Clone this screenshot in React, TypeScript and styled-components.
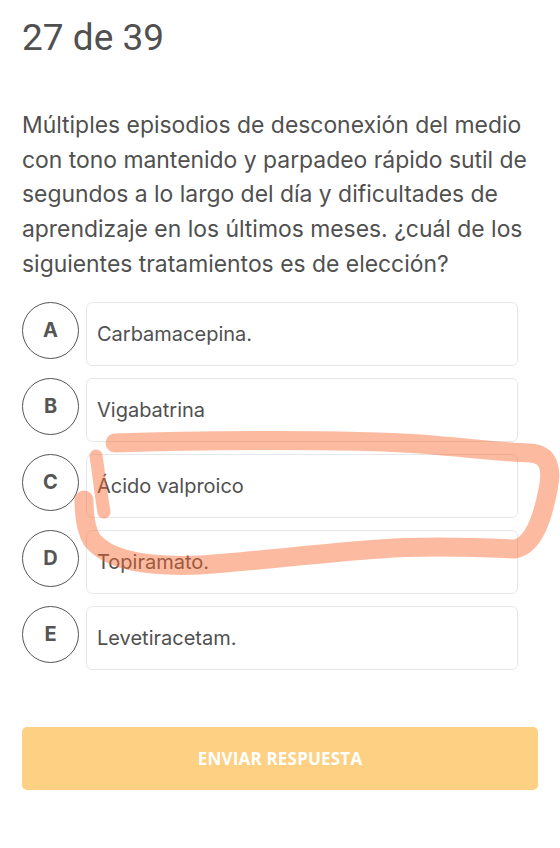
import React from "react";
import styled, { createGlobalStyle } from "styled-components";

const GlobalStyle = createGlobalStyle`
  html, body {
    margin: 0;
    padding: 0;
    background: #ffffff;
  }
  body {
    font-family: Inter, "Liberation Sans", sans-serif;
    color: #555555;
  }
`;

const Page = styled.div`
  position: relative;
  width: 560px;
  min-height: 848px;
  box-sizing: border-box;
  padding: 16px 22px 0;
`;

const Counter = styled.h1`
  margin: 0;
  font-family: Roboto, "Liberation Sans", sans-serif;
  font-size: 37px;
  line-height: 43px;
  font-weight: 400;
  color: #505050;
`;

const Question = styled.p`
  margin: 49px 0 0;
  font-size: 22.9px;
  line-height: 34.7px;
  color: #505050;
`;

const OptionList = styled.div`
  display: flex;
  flex-direction: column;
  gap: 12px;
  margin-top: 20px;
  padding-right: 20px;
`;

const OptionRow = styled.div`
  display: flex;
  align-items: flex-start;
  gap: 7px;
`;

const Letter = styled.div`
  flex: 0 0 auto;
  width: 55px;
  height: 55px;
  border: 1px solid #555555;
  border-radius: 50%;
  display: flex;
  align-items: center;
  justify-content: center;
  font-size: 20px;
  font-weight: 700;
  color: #555555;
`;

const OptionBox = styled.div`
  flex: 1;
  height: 62px;
  border: 1px solid #e4e8ec;
  border-radius: 6px;
  display: flex;
  align-items: center;
  padding: 0 10px;
  font-size: 20px;
  color: #505050;
`;

const SubmitButton = styled.button`
  display: block;
  width: 100%;
  height: 63px;
  margin-top: 57px;
  border: none;
  border-radius: 5px;
  background: #fed083;
  color: #ffffff;
  font-family: "Open Sans", "Liberation Sans", sans-serif;
  font-weight: 700;
  font-size: 17px;
  letter-spacing: 0.2px;
`;

const Scribble = styled.svg`
  position: absolute;
  left: 0;
  top: 0;
  width: 560px;
  height: 848px;
  pointer-events: none;
`;

const options = [
  { letter: "A", text: "Carbamacepina." },
  { letter: "B", text: "Vigabatrina" },
  { letter: "C", text: "Ácido valproico" },
  { letter: "D", text: "Topiramato." },
  { letter: "E", text: "Levetiracetam." },
];

export default function App() {
  return (
    <>
      <GlobalStyle />
      <Page>
        <Counter>27 de 39</Counter>
        <Question>
          Múltiples episodios de desconexión del medio con tono mantenido y
          parpadeo rápido sutil de segundos a lo largo del día y dificultades
          de aprendizaje en los últimos meses. ¿cuál de los siguientes
          tratamientos es de elección?
        </Question>
        <OptionList>
          {options.map((o) => (
            <OptionRow key={o.letter}>
              <Letter>{o.letter}</Letter>
              <OptionBox>{o.text}</OptionBox>
            </OptionRow>
          ))}
        </OptionList>
        <SubmitButton>ENVIAR RESPUESTA</SubmitButton>

        {/* hand-drawn marker around option C */}
        <Scribble viewBox="0 0 560 848">
          <g
            fill="none"
            stroke="rgb(248,102,44)"
            strokeOpacity={0.45}
            strokeLinecap="round"
            strokeLinejoin="round"
          >
            <path
              strokeWidth={19}
              d="M115 443 C 200 440, 350 439, 420 444 C 470 448, 500 452, 530 453 C 550 454, 552 470, 548 490 C 543 515, 535 545, 515 549 C 470 547, 420 546, 380 549 C 320 553, 250 562, 200 565 C 150 567, 110 562, 92 540 C 86 530, 84 515, 84 500"
            />
            <path strokeWidth={13} d="M96 456 C 99 475, 101 495, 104 512" />
          </g>
        </Scribble>
      </Page>
    </>
  );
}
